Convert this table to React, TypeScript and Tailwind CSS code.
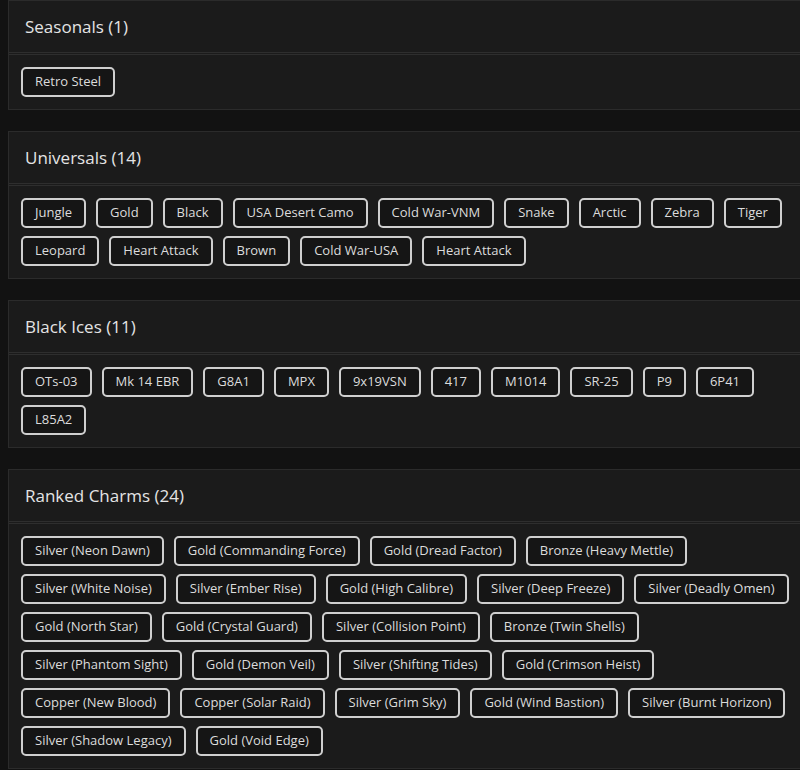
const sections = [
  { title: 'Seasonals', items: ['Retro Steel'] },
  {
    title: 'Universals',
    items: [
      'Jungle', 'Gold', 'Black', 'USA Desert Camo', 'Cold War-VNM', 'Snake', 'Arctic',
      'Zebra', 'Tiger', 'Leopard', 'Heart Attack', 'Brown', 'Cold War-USA', 'Heart Attack',
    ],
  },
  {
    title: 'Black Ices',
    items: ['OTs-03', 'Mk 14 EBR', 'G8A1', 'MPX', '9x19VSN', '417', 'M1014', 'SR-25', 'P9', '6P41', 'L85A2'],
  },
  {
    title: 'Ranked Charms',
    items: [
      'Silver (Neon Dawn)', 'Gold (Commanding Force)', 'Gold (Dread Factor)', 'Bronze (Heavy Mettle)',
      'Silver (White Noise)', 'Silver (Ember Rise)', 'Gold (High Calibre)', 'Silver (Deep Freeze)',
      'Silver (Deadly Omen)', 'Gold (North Star)', 'Gold (Crystal Guard)', 'Silver (Collision Point)',
      'Bronze (Twin Shells)', 'Silver (Phantom Sight)', 'Gold (Demon Veil)', 'Silver (Shifting Tides)',
      'Gold (Crimson Heist)', 'Copper (New Blood)', 'Copper (Solar Raid)', 'Silver (Grim Sky)',
      'Gold (Wind Bastion)', 'Silver (Burnt Horizon)', 'Silver (Shadow Legacy)', 'Gold (Void Edge)',
    ],
  },
];

export default function App() {
  return (
    <div
      className="h-[770px] overflow-hidden bg-[#121212] pl-2"
      style={{ fontFamily: '"Open Sans", sans-serif' }}
    >
      {sections.map((s) => (
        <div key={s.title} className="mb-[21px] w-[800px] border border-[#2b2b2b] bg-[#1b1b1b]">
          <div className="flex h-[54px] items-center border-b-[3px] border-double border-[#2e2e2e] px-4">
            <h2 className="text-[17px] font-medium text-[#e4e4e4]">
              {s.title} ({s.items.length})
            </h2>
          </div>
          <div className="flex flex-wrap gap-x-[10px] gap-y-2 px-3 py-3">
            {s.items.map((item, i) => (
              <span
                key={i}
                className="flex h-[30px] items-center rounded-[5px] border-2 border-[#cfcfcf] bg-[#151515] px-3 text-[13px] text-[#dcdcdc]"
              >
                {item}
              </span>
            ))}
          </div>
        </div>
      ))}
    </div>
  );
}
